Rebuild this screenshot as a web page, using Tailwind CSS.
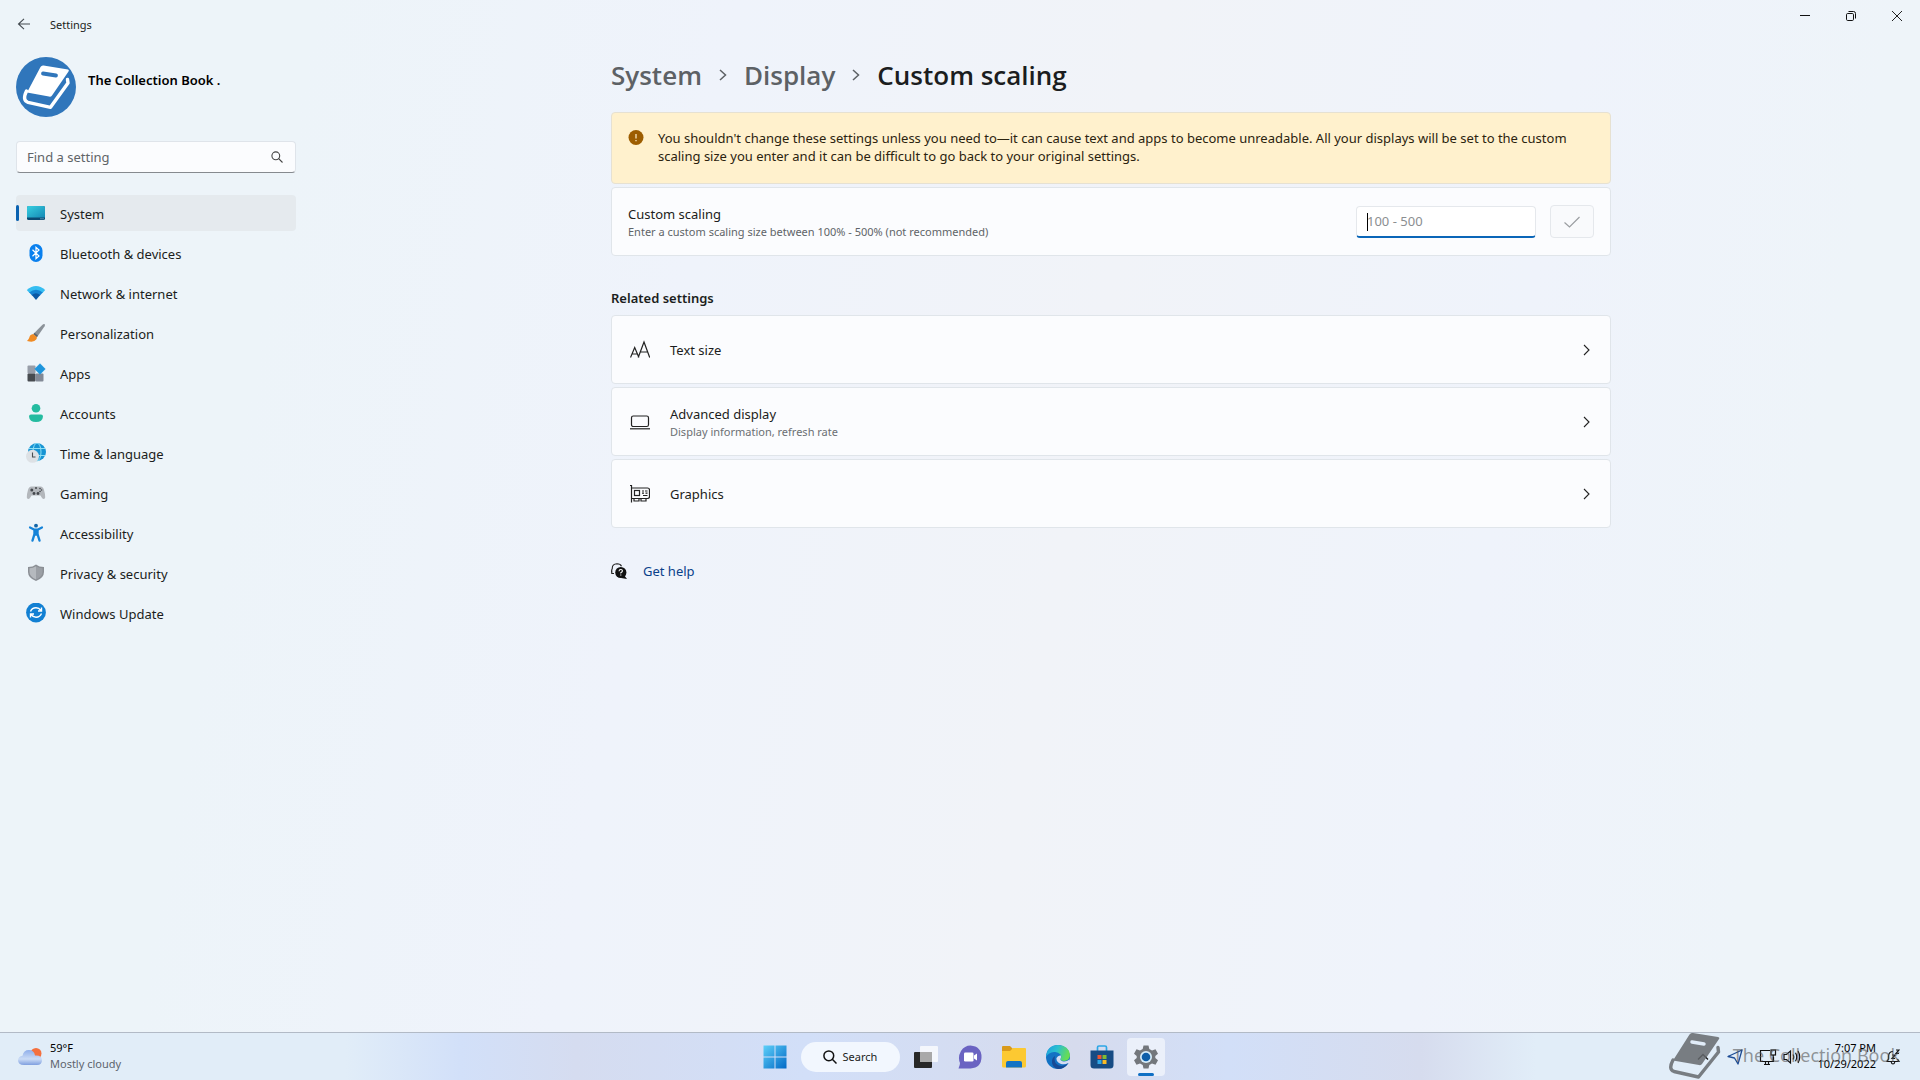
<!DOCTYPE html>
<html lang="en">
<head>
    <meta charset="UTF-8">
    <meta name="viewport" content="width=device-width, initial-scale=1.0">
    <title>Settings</title>
    <script src="https://cdn.jsdelivr.net/npm/@tailwindcss/browser@4"></script>
</head>
<body class="min-h-screen flex flex-col overflow-hidden bg-[linear-gradient(100deg,#edf4f9_15%,#eff3fb_35%,#f1f3f8_55%,#eff3fb_75%,#eef4f9_90%)] font-['Noto_Sans','Open_Sans',sans-serif] text-[13px] leading-[18px] text-[#1b1d20]">

    <!-- title bar -->
    <header class="flex justify-between h-12">
        <div class="flex items-center pl-4 gap-4">
            <button aria-label="Back" class="w-4 h-4">
                <svg class="w-4 h-4" viewBox="0 0 16 16" fill="none" stroke="#444a50" stroke-width="1.1"><path d="M14 8H2.5M8 2.8 2.5 8 8 13.2"/></svg>
            </button>
            <h2 class="text-[11px] pl-0.5 pt-0.5">Settings</h2>
        </div>
        <div class="flex h-8">
            <button aria-label="Minimize" class="w-[46px] flex items-center justify-center">
                <svg class="w-3 h-3" viewBox="0 0 12 12" fill="none" stroke="#111" stroke-width="1"><path d="M1 5.5H11"/></svg>
            </button>
            <button aria-label="Restore" class="w-[46px] flex items-center justify-center">
                <svg class="w-3 h-3" viewBox="0 0 12 12" fill="none" stroke="#111" stroke-width="1"><rect x="1.5" y="3.5" width="7" height="7" rx="1.2"/><path d="M3.5 1.5H8.5Q10.5 1.5 10.5 3.5V8.5"/></svg>
            </button>
            <button aria-label="Close" class="w-[46px] flex items-center justify-center">
                <svg class="w-3 h-3" viewBox="0 0 12 12" fill="none" stroke="#222" stroke-width="1"><path d="M1 1 11 11M11 1 1 11"/></svg>
            </button>
        </div>
    </header>

    <div class="flex flex-1">
        <!-- sidebar -->
        <aside class="w-[302px] shrink-0 pl-4 pr-1.5 pt-[9px]">
            <div class="flex items-start gap-3">
                <svg class="w-[60px] h-[60px]" viewBox="0 0 60 60">
                    <circle cx="30" cy="30" r="30" fill="#3076bb"/>
                    <path d="M27.500 8.500 52 12.500Q53.500 13 52.500 14.500L36 38.500Q35 40 33 39.600L11 35.500 24.500 10Q25.500 8.200 27.500 8.500Z" fill="#fff"/>
                    <path d="M10.500 34Q6 43.500 12 45.300L34.500 50.300 52 26 51.500 22.500" fill="none" stroke="#fff" stroke-width="3.400" stroke-linejoin="round" stroke-linecap="round"/>
                    <path d="M27 16.500 40 18.500" stroke="#3076bb" stroke-width="3.800" stroke-linecap="round"/>
                </svg>
                <h3 class="pt-3.5 font-semibold text-black">The Collection Book .</h3>
            </div>

            <label class="mt-6 w-[280px] h-8 flex items-center rounded border border-[#dfe4ea] border-b-[#868a8f] bg-[#fbfcfe] px-2.5">
                <input type="text" aria-label="Find a setting" placeholder="Find a setting" class="flex-1 min-w-0 outline-none placeholder:text-[#5f6468]">
                <svg class="w-3 h-3 mr-0.5" viewBox="0 0 12 12" fill="none" stroke="#444" stroke-width="1.1"><circle cx="4.800" cy="4.800" r="3.900"/><path d="M7.700 7.700 11.500 11.500"/></svg>
            </label>

            <nav class="mt-[22px] w-[280px] flex flex-col gap-1">
                <a href="#" class="relative flex items-center gap-3.5 h-9 pl-2.5 rounded bg-[#e5eaee]">
                    <span class="absolute left-0 top-2.5 w-[3px] h-4 rounded-full bg-[#0a62b1]"></span>
                    <svg class="w-5 h-5" viewBox="0 0 20 20"><defs><linearGradient id="sys" x1="0" y1="0" x2="1" y2="1"><stop stop-color="#37cfe0"/><stop offset="1" stop-color="#1589b5"/></linearGradient></defs><rect x="1" y="3" width="18" height="14" rx="1.500" fill="#0b4a73"/><path d="M2.500 3H17.500Q19 3 19 4.500V14.500H1V4.500Q1 3 2.500 3Z" fill="url(#sys)"/><path d="M14.500 15.800H15.500M16.500 15.800H17.500" stroke="#8fd0ea" stroke-width="1"/></svg>
                    <span class="pt-0.5">System</span>
                </a>
                <a href="#" class="flex items-center gap-3.5 h-9 pl-2.5 rounded">
                    <svg class="w-5 h-5" viewBox="0 0 20 20"><rect x="3.500" y="1" width="13" height="18" rx="6.500" fill="#0a80ee"/><path d="M6.500 6.800 13 13 10 15.600V4.400L13 7 6.500 13.200" fill="none" stroke="#fff" stroke-width="1.200"/></svg>
                    <span class="pt-0.5">Bluetooth &amp; devices</span>
                </a>
                <a href="#" class="flex items-center gap-3.5 h-9 pl-2.5 rounded">
                    <svg class="w-5 h-5" viewBox="0 0 20 20"><path d="M.800 7Q10-.800 19.200 7L16.500 10H3.500Z" fill="#35bdf1"/><path d="M3.200 9.500Q10 3.800 16.800 9.500L14 12.500H6Z" fill="#1583d3"/><path d="M5.800 12Q10 8.500 14.200 12L10 17Z" fill="#0a57a4"/></svg>
                    <span class="pt-0.5">Network &amp; internet</span>
                </a>
                <a href="#" class="flex items-center gap-3.5 h-9 pl-2.5 rounded">
                    <svg class="w-5 h-5" viewBox="0 0 20 20"><path d="M18.700 1.300Q19.400 2 18.600 3.200L11.500 13.500 7.800 10.500 16.500 1.800Q17.800.600 18.700 1.300Z" fill="#8b9299"/><path d="M8.500 9.800 12 12.800 10.800 14.300 7.200 11.200Z" fill="#5d646b"/><path d="M7.200 11Q4 11.500 3.400 14.300 2.900 16.500 1 18 8 20 10.200 16.600 11.200 15 10.800 14Z" fill="#f08b24"/></svg>
                    <span class="pt-0.5">Personalization</span>
                </a>
                <a href="#" class="flex items-center gap-3.5 h-9 pl-2.5 rounded">
                    <svg class="w-5 h-5" viewBox="0 0 20 20"><rect x="1.500" y="2.500" width="8" height="8" rx="1" fill="#979da8"/><rect x="1.500" y="10.500" width="8" height="8" rx="1" fill="#474b50"/><rect x="9.500" y="10.500" width="8" height="8" rx="1" fill="#828996"/><path d="M14 .800 19.200 6 14 11.200 8.800 6Z" fill="#1e95dc" stroke="#1e95dc" stroke-width=".8" stroke-linejoin="round"/></svg>
                    <span class="pt-0.5">Apps</span>
                </a>
                <a href="#" class="flex items-center gap-3.5 h-9 pl-2.5 rounded">
                    <svg class="w-5 h-5" viewBox="0 0 20 20" fill="#24bba0"><circle cx="10" cy="5.300" r="4.300"/><path d="M5 11.500H15Q17 11.500 17 13.500 16.500 19 10 19T3 13.500Q3 11.500 5 11.500Z"/></svg>
                    <span class="pt-0.5">Accounts</span>
                </a>
                <a href="#" class="flex items-center gap-3.5 h-9 pl-2.5 rounded">
                    <svg class="w-5 h-5" viewBox="0 0 20 20"><circle cx="11" cy="9" r="9" fill="#1794d3"/><g fill="none" stroke="#8fe0f4" stroke-width="1"><ellipse cx="11" cy="9" rx="4" ry="9"/><path d="M3 5.500H19M2 12.500H19"/></g><circle cx="6.500" cy="13.300" r="6.500" fill="#dde1e5"/><path d="M6.500 9.500V14H9.500" fill="none" stroke="#4a4d50" stroke-width="1.100"/></svg>
                    <span class="pt-0.5">Time &amp; language</span>
                </a>
                <a href="#" class="flex items-center gap-3.5 h-9 pl-2.5 rounded">
                    <svg class="w-5 h-5" viewBox="0 0 20 20"><path d="M6 3.500H14Q17 3 18 7 19.500 12 19.200 14.500 18 17.500 15.700 14.500L14.500 12.500H5.500L4.300 14.500Q2 17.500.800 14.500.500 12 2 7 3 3 6 3.500Z" fill="#b3b7bc"/><g fill="#44484d"><circle cx="5.800" cy="7" r="1.500"/><circle cx="8" cy="10.500" r="1.400"/><circle cx="12" cy="10.500" r="1.400"/><circle cx="10" cy="5" r="1"/><circle cx="14" cy="5.500" r=".8"/><circle cx="15.500" cy="7" r=".8"/><circle cx="14" cy="8.500" r=".8"/></g></svg>
                    <span class="pt-0.5">Gaming</span>
                </a>
                <a href="#" class="flex items-center gap-3.5 h-9 pl-2.5 rounded">
                    <svg class="w-5 h-5" viewBox="0 0 20 20" fill="none" stroke="#1583d8" stroke-linecap="round" stroke-linejoin="round"><circle cx="10" cy="2.700" r="1.900" fill="#1265a8" stroke="none"/><path d="M4 4.500 8 6.500H12L16 4.500" stroke-width="2.200"/><path d="M8.500 7.500H11.500V11L13.500 17.500M8.500 7.500V11L6.500 17.500M10 7.500V11.500" stroke-width="2.400"/></svg>
                    <span class="pt-0.5">Accessibility</span>
                </a>
                <a href="#" class="flex items-center gap-3.5 h-9 pl-2.5 rounded">
                    <svg class="w-5 h-5" viewBox="0 0 20 20"><path d="M10 1.500Q13 4 18 4V9Q18 15 10 18 2 15 2 9V4Q7 4 10 1.500Z" fill="#8b8f95"/><path d="M10 3.200Q13 5 16.500 5.200V9Q16.500 13.800 10 16.500Z" fill="#9b9fa5"/><path d="M10 3.200Q7 5 3.500 5.200V9Q3.500 13.800 10 16.500Z" fill="#b5b9be"/></svg>
                    <span class="pt-0.5">Privacy &amp; security</span>
                </a>
                <a href="#" class="flex items-center gap-3.5 h-9 pl-2.5 rounded">
                    <svg class="w-5 h-5" viewBox="0 0 20 20"><circle cx="10" cy="9.500" r="9.900" fill="#1280d3"/><g fill="none" stroke="#fff" stroke-width="1.400"><path d="M4.500 8.500Q6 4.800 10 4.800 13 4.800 15 7.500M15.500 4.500V8H12M15.500 10.500Q14 14.200 10 14.200 7 14.200 5 11.500M4.500 14.500V11H8"/></g></svg>
                    <span class="pt-0.5">Windows Update</span>
                </a>
            </nav>
        </aside>

        <!-- content -->
        <main class="flex-1 pt-[9px]">
            <div class="max-w-[1000px] mx-auto">
                <h1 class="flex items-center text-[26px] leading-9 font-semibold font-['Open_Sans','Noto_Sans',sans-serif]">
                    <a href="#" class="text-[#5d6165]">System</a>
                    <svg class="w-[10px] h-3 mx-4" viewBox="0 0 10 12" fill="none" stroke="#5d6165" stroke-width="1.500"><path d="M2 1 7.500 6 2 11"/></svg>
                    <a href="#" class="text-[#5d6165]">Display</a>
                    <svg class="w-[10px] h-3 mx-4" viewBox="0 0 10 12" fill="none" stroke="#5d6165" stroke-width="1.500"><path d="M2 1 7.500 6 2 11"/></svg>
                    <span>Custom scaling</span>
                </h1>

                <div class="mt-[19px] h-[72px] flex gap-3.5 rounded border border-[#e6e1d2] bg-[#fff1cd] px-4 pt-4">
                    <svg class="w-4 h-4 mt-px shrink-0" viewBox="0 0 16 16"><circle cx="8" cy="7.500" r="7.500" fill="#9d5d00"/><path d="M8 4V8.500M8 10V11.200" stroke="#fff1cd" stroke-width="1.200"/></svg>
                    <p class="text-[#2b230f]">You shouldn't change these settings unless you need to—it can cause text and apps to become unreadable. All your displays will be set to the custom scaling size you enter and it can be difficult to go back to your original settings.</p>
                </div>

                <div class="mt-[3px] h-[69px] flex items-center rounded border border-[#e0e5ea] bg-[#fbfcfe] px-4">
                    <div class="flex-1 pt-0.5">
                        <label for="scale" class="block">Custom scaling</label>
                        <p class="text-[11px] text-[#5f6468]">Enter a custom scaling size between 100% - 500% (not recommended)</p>
                    </div>
                    <div class="relative w-[180px] h-8 mr-3.5 rounded overflow-hidden border border-[#e5e8ec] border-b-2 border-b-[#0a66b8] bg-white">
                        <span class="absolute left-2.5 top-1.5 w-px h-[18px] bg-black"></span>
                        <input id="scale" type="text" placeholder="100 - 500" class="w-full h-full px-2.5 outline-none placeholder:text-[#8b8e91]">
                    </div>
                    <button aria-label="Apply" class="w-11 h-[33px] flex items-center justify-center rounded border border-[#e5e8ec] bg-[#f9fafc]">
                        <svg class="w-4 h-4" viewBox="0 0 16 16" fill="none" stroke="#9b9ea1" stroke-width="1.200"><path d="M.500 8.500 5.500 13 15.500 3"/></svg>
                    </button>
                </div>

                <h3 class="mt-[33px] mb-2 font-semibold">Related settings</h3>

                <div class="flex flex-col gap-[3px]">
                    <a href="#" class="h-[69px] flex items-center rounded border border-[#e0e5ea] bg-[#fbfcfe] px-[18px]">
                        <svg class="w-5 h-5 mr-5" viewBox="0 0 20 20" fill="none" stroke="#222" stroke-width="1.200"><path d="M.500 17.500 4.700 7.500 8.900 17.500M2 14H7.500M8.200 17.500 14 2 19.700 17.500M10.200 12H17.800"/></svg>
                        <span class="flex-1">Text size</span>
                        <svg class="w-[10px] h-3" viewBox="0 0 10 12" fill="none" stroke="#222" stroke-width="1.100"><path d="M2 1 7 6 2 11"/></svg>
                    </a>
                    <a href="#" class="h-[69px] flex items-center rounded border border-[#e0e5ea] bg-[#fbfcfe] px-[18px]">
                        <svg class="w-5 h-5 mr-5" viewBox="0 0 20 20" fill="none" stroke="#222" stroke-width="1.200"><rect x="1.500" y="4" width="17" height="10.500" rx="1.800"/><path d="M0 16.800H20"/></svg>
                        <span class="flex-1 pt-0.5">
                            <span class="block">Advanced display</span>
                            <span class="block text-[11px] text-[#6b6f73]">Display information, refresh rate</span>
                        </span>
                        <svg class="w-[10px] h-3" viewBox="0 0 10 12" fill="none" stroke="#222" stroke-width="1.100"><path d="M2 1 7 6 2 11"/></svg>
                    </a>
                    <a href="#" class="h-[69px] flex items-center rounded border border-[#e0e5ea] bg-[#fbfcfe] px-[18px]">
                        <svg class="w-5 h-5 mr-5" viewBox="0 0 20 20" fill="none" stroke="#222" stroke-width="1.200"><path d="M0 1.500H1.500V18.500M1.500 4H17.500Q19.500 4 19.500 6V12.500Q19.500 14.500 17.500 14.500H1.500"/><rect x="4.500" y="6.500" width="5" height="5"/><path d="M4 14.500V17H9V14.500M11 14.500V17H16V14.500M12 7H14M15 7H17.500M12 9.200H14M15.500 9.200H17.500M13 11.500H17.500"/></svg>
                        <span class="flex-1">Graphics</span>
                        <svg class="w-[10px] h-3" viewBox="0 0 10 12" fill="none" stroke="#222" stroke-width="1.100"><path d="M2 1 7 6 2 11"/></svg>
                    </a>
                </div>

                <a href="#" class="mt-[34px] w-fit flex items-center gap-4 text-[#0a418a]">
                    <svg class="w-4 h-4" viewBox="0 0 16 16"><path d="M1 10.500Q0 8 1.300 5.500 1 1 6 .800 9.500.800 10.500 3.200M.800 7.500V10.500H3" fill="none" stroke="#222" stroke-width="1.100"/><circle cx="9.800" cy="9.500" r="5.600" fill="#111"/><path d="M13 12 16 16 10 15Z" fill="#111"/><path d="M8 8.200Q8.200 6.500 9.800 6.500T11.400 8Q11.400 9 9.800 9.700V10.500M9.800 11.500V12.600" fill="none" stroke="#fff" stroke-width="1.100"/></svg>
                    Get help
                </a>
            </div>
        </main>
    </div>

    <!-- taskbar -->
    <footer class="relative h-12 grid grid-cols-[1fr_auto_1fr] items-center border-t border-[#b2bac6] bg-[linear-gradient(90deg,#e1edf8_18%,#d2e0f9_24%,#d5dcf0_30%,#d2dff8_42%,#d6dbed_56%,#d2dff8_64%,#d6dcee_74%,#e1edf8_80%)] text-[11px] leading-4">
        <div class="flex items-center gap-2 pl-[18px]">
            <svg class="w-6 h-5" viewBox="0 0 24 20"><defs><linearGradient id="cloud" x1="0" y1="0" x2="0" y2="1"><stop stop-color="#8faeea"/><stop offset=".6" stop-color="#cbdcf6"/><stop offset="1" stop-color="#7f9fdf"/></linearGradient></defs><circle cx="18" cy="6.500" r="5.500" fill="#f4703e"/><path d="M6 18Q0 18 0 13.300 .300 9.300 4.500 8.800 5.500 3 11 3 16 3 17 8.500 24 8 24 13.300 24 18 19 18Z" fill="url(#cloud)"/></svg>
            <div class="pb-0.5">
                <p class="text-black">59°F</p>
                <p class="text-[#5d646e]">Mostly cloudy</p>
            </div>
        </div>

        <div class="flex items-center">
            <button aria-label="Start" class="w-11 h-10 flex items-center justify-center">
                <svg class="w-6 h-6" viewBox="0 0 24 24"><defs><linearGradient id="win" gradientUnits="userSpaceOnUse" x1="0" y1="0" x2="24" y2="24"><stop stop-color="#5fd2fa"/><stop offset="1" stop-color="#0067c5"/></linearGradient></defs><path d="M.500.500H11.500V11.500H.500ZM12.500.500H23.500V11.500H12.500ZM.500 12.500H11.500V23.500H.500ZM12.500 12.500H23.500V23.500H12.500Z" fill="url(#win)"/></svg>
            </button>
            <button class="mx-1 w-[99px] h-[30px] flex items-center justify-center gap-1.5 rounded-full bg-[#f2f7fe]">
                <svg class="w-3.5 h-3.5" viewBox="0 0 14 14" fill="none" stroke="#111" stroke-width="1.500"><circle cx="5.800" cy="5.800" r="4.900"/><path d="M9.300 9.300 13.500 13.500"/></svg>
                Search
            </button>
            <button aria-label="Task view" class="w-11 h-10 flex items-center justify-center">
                <svg class="w-6 h-6" viewBox="0 0 24 24"><rect x="0" y="7" width="18" height="16" rx="1" fill="#272727"/><rect x="6" y="1" width="18" height="16" rx="1" fill="#fff" opacity=".75"/><rect x="6" y="7" width="12" height="10" fill="#a9a9a9"/></svg>
            </button>
            <button aria-label="Chat" class="w-11 h-10 flex items-center justify-center">
                <svg class="w-6 h-6" viewBox="0 0 24 24"><path d="M12.500.500Q23.500 1.500 23.500 12T12.500 23.500H.500Q2 20 2 18-.500 12 3 6 6.500.500 12.500.500Z" fill="#6a63c2"/><rect x="6" y="7.500" width="9.500" height="9" rx="1.300" fill="#fff"/><path d="M16 10.500 19 8.500V15.500L16 13.500Z" fill="#fff"/></svg>
            </button>
            <button aria-label="File Explorer" class="w-11 h-10 flex items-center justify-center">
                <svg class="w-6 h-6" viewBox="0 0 24 24"><path d="M0 2Q0 1 1 1H8L11 4 8 7H0Z" fill="#d99a1b"/><path d="M0 6H8L11 3H23Q24 3 24 4V21Q24 22.500 22.500 22.500H1.500Q0 22.500 0 21Z" fill="#fcc932"/><path d="M4 22.500V18Q4 16 6 16H18Q20 16 20 18V22.500Z" fill="#1273c4"/></svg>
            </button>
            <button aria-label="Edge" class="w-11 h-10 flex items-center justify-center">
                <svg class="w-6 h-6" viewBox="0 0 24 24"><defs><linearGradient id="edge" x1="0" y1="0" x2="1" y2=".3"><stop stop-color="#1b9de2"/><stop offset=".5" stop-color="#2bc0cf"/><stop offset="1" stop-color="#66dc55"/></linearGradient></defs><circle cx="12" cy="12" r="12" fill="#1272c4"/><path d="M0 12Q1 0 12 0 23 .500 24 10 24 15.500 18 16 14 16 14.500 13.500 16 12 14.500 9.500 12 6.500 8 7 2.500 7.500 0 12Z" fill="url(#edge)"/><path d="M9 11Q7 18 13 20.500 18 22 22.500 18 18.500 24 12 24 7 23 6 18 5.500 13 9 11Z" fill="#174a95"/><path d="M14.800 10.500Q15.500 12.500 14.300 14 14.500 16 18 16.500 21 16.500 23.500 14.500L24.500 18 22.300 18Q19 20 15 19 10 17 10.500 13 12 10 14.800 10.500Z" fill="#d4dcf2"/></svg>
            </button>
            <button aria-label="Microsoft Store" class="w-11 h-10 flex items-center justify-center">
                <svg class="w-6 h-6" viewBox="0 0 24 24"><path d="M7.500 6V2.500Q7.500 1 9 1H15Q16.500 1 16.500 2.500V6" fill="none" stroke="#2ea7e6" stroke-width="1.700"/><path d="M.500 5.500H23.500V20Q23.500 23.500 20 23.500H4Q.500 23.500 .500 20Z" fill="#174c84"/><path d="M7.500 10H11.500V14H7.500Z" fill="#ee5530"/><path d="M12.500 10H16.500V14H12.500Z" fill="#82bb32"/><path d="M7.500 15H11.500V19H7.500Z" fill="#2ea7e6"/><path d="M12.500 15H16.500V19H12.500Z" fill="#f9bb25"/></svg>
            </button>
            <button aria-label="Settings" class="relative mx-[3px] w-[38px] h-[38px] flex items-center justify-center rounded bg-[#ebf0fa]">
                <svg class="w-6 h-6" viewBox="0 0 24 24"><path d="M9.500.500H14.500L15.300 4 18 5.500 21.500 4.300 24 8.800 21.300 11V13L24 15.200 21.500 19.700 18 18.500 15.300 20 14.500 23.500H9.500L8.700 20 6 18.500 2.500 19.700 0 15.200 2.700 13V11L0 8.800 2.500 4.300 6 5.500 8.700 4Z" fill="#73777c"/><circle cx="12" cy="12" r="6" fill="#d5ecfa"/><circle cx="12" cy="12" r="4.300" fill="#0d5ea9"/></svg>
                <span class="absolute bottom-0 w-4 h-[3px] rounded-full bg-[#0f6fc4]"></span>
            </button>
        </div>

        <div class="flex items-center justify-end pr-5 text-black">
            <svg class="w-3 h-3 mr-[18px]" viewBox="0 0 12 12" fill="none" stroke="#111" stroke-width="1.300"><path d="M1 8.500 6 3.500 11 8.500"/></svg>
            <svg class="w-4 h-4 mr-4" viewBox="0 0 16 16" fill="none" stroke="#1d4c95" stroke-width="1.300" stroke-linejoin="round"><path d="M15 1 1 7.500 7.500 9 11 15Z"/></svg>
            <svg class="w-[18px] h-4 mr-1.5" viewBox="0 0 18 16" fill="none" stroke="#111" stroke-width="1.200"><path d="M11 1.500H1.500V12.500H14.500V8M5 15.500H11M6.500 12.500V15.500M9.500 12.500V15.500"/><rect x="12" y="1" width="4.500" height="5"/><path d="M14.200 6V12"/></svg>
            <svg class="w-[18px] h-4 mr-4" viewBox="0 0 18 16" fill="none" stroke="#111" stroke-width="1.200"><path d="M1 5.500H3.500L7.500 2V14L3.500 10.500H1ZM10 5.500Q11.500 8 10 10.500M12.500 3.800Q15 8 12.500 12.200M15 2Q18.500 8 15 14"/></svg>
            <div class="text-right pb-0.5">
                <p>7:07 PM</p>
                <p>10/29/2022</p>
            </div>
            <svg class="w-3.5 h-4 ml-2.5" viewBox="0 0 14 16" fill="none" stroke="#111" stroke-width="1.200"><path d="M7 2.500Q3 2.500 2.500 7V10L1 12.500H13L11.500 10M5 12.500Q5.500 15 7 15T9 12.500M10 1H13L10 4.500H13M6 6H9L6 9.500H9"/></svg>
        </div>

        <!-- channel mark over the tray -->
        <div class="absolute right-5 top-0 h-12 flex items-center gap-3 text-lg text-[#555]/60 pointer-events-none">
            <svg class="w-[52px] h-12" viewBox="0 0 52 48">
                <g opacity=".85"><path d="M24 0 49 4Q51 4.500 50 6L33 31Q32 32.500 30 32L4 27.500 20.500 1.500Q22 -.300 24 0Z" fill="#666a6e"/><path d="M4 27Q-1 36.500 5 38.500L29.500 44 49.500 19 49 14.500" fill="none" stroke="#666a6e" stroke-width="3.400" stroke-linejoin="round" stroke-linecap="round"/><path d="M23 9 35 11" stroke="#e1ecf8" stroke-width="3.500" stroke-linecap="round"/></g>
            </svg>
            <span class="pb-1">The Collection Book</span>
        </div>
    </footer>
</body>
</html>
